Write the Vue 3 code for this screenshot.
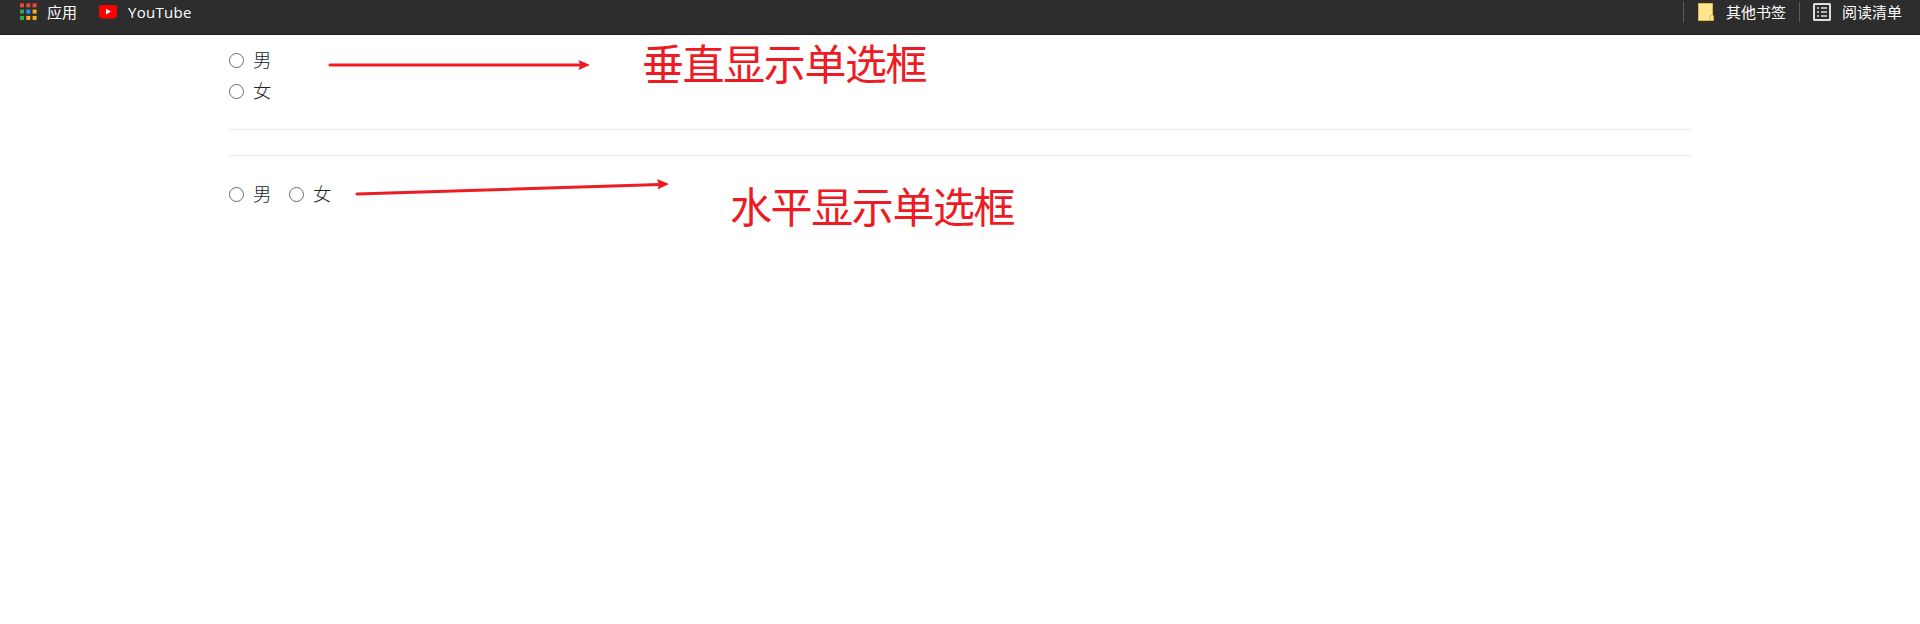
<script setup>
const reds = '#ed1c24'
const dots = [
  ['#e8453c', '#e8453c', '#e8453c'],
  ['#34a853', '#2196f3', '#fbae17'],
  ['#34a853', '#fbae17', '#fbae17'],
]
</script>

<template>
  <div class="page">
    <header class="bar">
      <svg class="apps" width="18" height="18" viewBox="0 0 18 18">
        <template v-for="(row, r) in dots" :key="r">
          <rect v-for="(c, i) in row" :key="i" :x="i * 6.3" :y="r * 6.3 + 0.3" width="4" height="4" :fill="c" />
        </template>
      </svg>
      <span class="label apps-label">应用</span>
      <svg class="yt" width="18" height="14" viewBox="0 0 18 14">
        <rect width="18" height="13.4" rx="3" fill="#f00" />
        <path d="M7 3.7 12 6.6 7 9.6z" fill="#fff" />
      </svg>
      <span class="label latin">YouTube</span>
      <div class="right">
        <i class="sep"></i>
        <svg class="folder" width="16" height="18" viewBox="0 0 16 18">
          <path d="M.5.5h14v11.5l.9.7v4.8H.5z" fill="#ffe693" stroke="#dfb843" />
          <path d="M12 17.5v-3.7q0-1 1-1.2l1.5-.3" fill="none" stroke="#dfb843" />
        </svg>
        <span class="label">其他书签</span>
        <i class="sep second"></i>
        <svg class="list" width="18" height="18" viewBox="0 0 18 18">
          <rect x="1" y="1" width="16" height="16" rx=".5" fill="none" stroke="#dedede" stroke-width="2" />
          <path d="M4 5h2M4 9h2M4 13h2M8 5h6M8 9h6M8 13h6" stroke="#dedede" stroke-width="1.5" />
        </svg>
        <span class="label">阅读清单</span>
      </div>
    </header>
    <main class="content">
      <label class="option"><span class="radio"></span><span class="text">男</span></label>
      <label class="option"><span class="radio"></span><span class="text">女</span></label>
      <hr class="first" />
      <hr class="next" />
      <div class="inline">
        <label class="option"><span class="radio"></span><span class="text">男</span></label>
        <label class="option"><span class="radio"></span><span class="text">女</span></label>
      </div>
    </main>
    <svg class="arrows" width="1920" height="624" viewBox="0 0 1920 624">
      <g :stroke="reds" :fill="reds" stroke-width="3" stroke-linecap="round">
        <path d="M330 65H580" />
        <path d="M357 194 660 184.4" />
        <path stroke="none" d="M578.5 60 590 65 578.5 70 580 65z" />
        <path stroke="none" d="M657 179 669 184 657.5 189.5 659 184.5z" />
      </g>
    </svg>
    <div class="note upper">垂直显示单选框</div>
    <div class="note lower">水平显示单选框</div>
  </div>
</template>

<style>
body { background: #fff; }
</style>

<style scoped>
.page {
  position: relative;
  height: 624px;
  overflow: hidden;
  font-family: "Noto Sans CJK SC", sans-serif;
}
.bar {
  display: flex;
  align-items: flex-start;
  box-sizing: border-box;
  height: 35px;
  padding: 0 18px 0 20px;
  background: #2d2d2d;
  border-bottom: 1px solid #1f1d1d;
  color: #fff;
}
.bar svg { flex: none; display: block; margin-top: 3px; }
.label { font-size: 15px; line-height: 24px; white-space: nowrap; }
.apps-label { margin-left: 9px; }
.bar .yt { margin: 5px 0 0 22px; }
.latin { margin-left: 11px; font-family: "Open Sans", "Noto Sans", sans-serif; letter-spacing: 0.3px; }
.right { display: flex; margin-left: auto; }
.sep { width: 1px; height: 20px; margin-top: 2px; background: #5c5c5c; }
.bar .folder { margin-left: 14px; margin-right: 12px; }
.second { margin-left: 13px; }
.bar .list { margin-left: 13px; margin-right: 11px; }
.content { width: 1462px; margin-left: 229px; padding-top: 10px; }
.option {
  display: flex;
  align-items: center;
  height: 31px;
  font-size: 18.5px;
  line-height: 29px;
  color: #212529;
}
.radio {
  box-sizing: border-box;
  width: 15px;
  height: 15px;
  margin-right: 9px;
  border: 1px solid #6b6b6b;
  border-radius: 50%;
}
.text { width: 18px; white-space: nowrap; padding-bottom: 2px; font-weight: 300; }
hr { height: 1px; border: 0; background: #ebebeb; }
.first { margin: 22px 0 25px; }
.next { margin: 0 0 23px; }
.inline { display: flex; gap: 18px; }
.arrows { position: absolute; left: 0; top: 0; pointer-events: none; }
.note {
  position: absolute;
  font-size: 42px;
  letter-spacing: -1.4px;
  line-height: 60px;
  color: #ed1c24;
  white-space: nowrap;
}
.upper { left: 642px; top: 32px; }
.lower { left: 730px; top: 175px; }
</style>
